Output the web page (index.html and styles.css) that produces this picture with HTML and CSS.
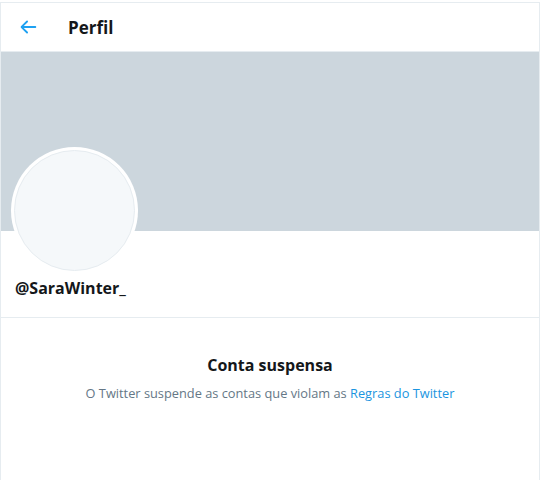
FILE: index.html
```html
<!DOCTYPE html>
<html lang="pt">
<head>
<meta charset="utf-8">
<title>Perfil</title>
<link rel="stylesheet" href="styles.css">
</head>
<body>
<div class="page">
  <header class="topbar">
    <div class="back">
      <svg viewBox="0 0 24 24" width="22" height="22"><path d="M20 11H7.414l4.293-4.293a1 1 0 0 0-1.414-1.414l-6 6a1 1 0 0 0 0 1.414l6 6a1 1 0 0 0 1.414-1.414L7.414 13H20a1 1 0 1 0 0-2z" fill="#1da1f2"/></svg>
    </div>
    <h1 class="title">Perfil</h1>
  </header>
  <div class="banner"></div>
  <div class="profile">
    <div class="avatar-wrap"><div class="avatar"></div></div>
    <div class="handle">@SaraWinter_</div>
  </div>
  <section class="suspended">
    <h2 class="s-title">Conta suspensa</h2>
    <p class="s-text">O Twitter suspende as contas que violam as <a href="#" class="link">Regras do Twitter</a></p>
  </section>
</div>
</body>
</html>
```
FILE: styles.css
```css
html, body { margin: 0; padding: 0; background: #fff; }
body { padding-top: 2px; font-family: "Open Sans", "Noto Sans", sans-serif; color: #14171a; }
.page {
  width: 538px;
  height: 480px;
  border: 1px solid #e6ecf0;
  border-bottom: none;
}
.topbar {
  height: 48px;
  display: flex;
  align-items: center;
  border-bottom: 1px solid #e6ecf0;
}
.back { width: 67px; display: flex; padding-left: 16px; box-sizing: border-box; }
.back svg { display: block; }
.title { margin: 0; font-size: 17px; font-weight: 700; }
.banner { height: 179px; background: #ccd6dd; }
.profile { position: relative; height: 86px; border-bottom: 1px solid #e6ecf0; }
.avatar-wrap {
  position: absolute;
  left: 10px;
  top: -84px;
  width: 121px;
  height: 121px;
  border-radius: 50%;
  background: #fff;
  padding: 3px;
}
.avatar {
  width: 119px;
  height: 119px;
  border-radius: 50%;
  background: #f5f8fa;
  border: 1px solid #e6ecf0;
}
.handle {
  position: absolute;
  left: 14px;
  top: 46px;
  font-size: 16px;
  font-weight: 700;
}
.suspended { text-align: center; padding-top: 36px; }
.s-title { margin: 0; font-size: 16px; font-weight: 700; }
.s-text { margin: 8px 0 0; font-size: 12.8px; color: #657786; }
.link { color: #1b95e0; text-decoration: none; }
```
